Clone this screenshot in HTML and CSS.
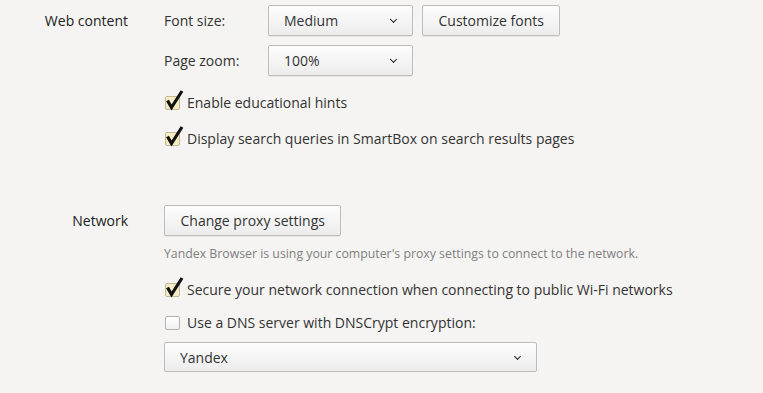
FILE: index.html
```html
<!DOCTYPE html>
<html lang="en">
<head>
  <meta charset="utf-8">
  <title>Settings</title>
  <link rel="stylesheet" href="styles.css">
</head>
<body>
  <div class="settings">
    <!-- Web content -->
    <section class="section">
      <div class="section-label">Web content</div>
      <div class="section-body">
        <div class="row">
          <span class="row-label">Font size:</span>
          <div class="select select-short">Medium<span class="chev"></span></div>
          <button class="btn" type="button">Customize fonts</button>
        </div>
        <div class="row row-gap">
          <span class="row-label">Page zoom:</span>
          <div class="select select-short">100%<span class="chev"></span></div>
        </div>
        <label class="check check-first">
          <span class="box checked"><svg class="tick" width="20" height="22" viewBox="0 0 20 22"><path d="M3.5 11.5 L7.5 18.5 L18 2"/></svg></span>
          Enable educational hints
        </label>
        <label class="check">
          <span class="box checked"><svg class="tick" width="20" height="22" viewBox="0 0 20 22"><path d="M3.5 11.5 L7.5 18.5 L18 2"/></svg></span>
          Display search queries in SmartBox on search results pages
        </label>
      </div>
    </section>

    <!-- Network -->
    <section class="section section-network">
      <div class="section-label">Network</div>
      <div class="section-body">
        <div class="row">
          <button class="btn" type="button">Change proxy settings</button>
        </div>
        <p class="hint">Yandex Browser is using your computer's proxy settings to connect to the network.</p>
        <label class="check check-after-hint">
          <span class="box checked"><svg class="tick" width="20" height="22" viewBox="0 0 20 22"><path d="M3.5 11.5 L7.5 18.5 L18 2"/></svg></span>
          Secure your network connection when connecting to public Wi-Fi networks
        </label>
        <label class="check check-tight"><span class="box"></span>Use a DNS server with DNSCrypt encryption:</label>
        <div class="select select-wide">Yandex<span class="chev"></span></div>
      </div>
    </section>
  </div>
</body>
</html>
```

FILE: styles.css
```css
:root {
  --bg: #f5f4f2;
  --text: #333;
  --border: #bdbdbd;
  --font: 'Open Sans', 'Noto Sans', sans-serif;
}
*, *::before, *::after { box-sizing: border-box; }
body { margin: 0; background: var(--bg); color: var(--text); font-family: var(--font); font-size: 14px; }
.settings { padding-top: 5px; }
.section { display: grid; grid-template-columns: 128px 1fr; column-gap: 36px; }
.section-network { margin-top: 57px; }
.section-label { line-height: 31px; text-align: right; color: #222; }
.section-body { display: flex; flex-direction: column; align-items: flex-start; }
.row { display: flex; align-items: center; height: 31px; }
.row-gap { margin-top: 9px; }
.row-label { width: 104px; }
.select, .btn {
  height: 31px; border: 1px solid var(--border); border-radius: 2px;
  background: linear-gradient(#fdfdfd, #ececec);
  box-shadow: 0 1px 0 rgba(0,0,0,.06);
  font-family: var(--font); font-size: 14px; color: var(--text);
}
.select { display: flex; align-items: center; justify-content: space-between; padding: 0 16px 0 15px; }
.select-short { width: 145px; }
.select-wide { width: 373px; height: 30px; margin-top: 10px; }
.chev { width: 5px; height: 5px; border-right: 1.6px solid #222; border-bottom: 1.6px solid #222; transform: translateY(-1px) rotate(45deg); }
.btn { padding: 0 15.5px; margin-left: 9px; cursor: pointer; }
.row .btn:first-child { margin-left: 0; }
.check { display: flex; align-items: center; height: 20px; margin-top: 16px; }
.check-first { margin-top: 16px; }
.check-after-hint { margin-top: 17px; }
.check-tight { margin-top: 13px; }
.box { position: relative; flex: none; width: 15px; height: 14px; margin: 2px 7px 0 1px; border: 1px solid #b4b4b4; border-radius: 2px; background: linear-gradient(#fff, #f0f0f0); }
.box.checked { background: #f7edc4; border-color: #c2b995; }
.tick { position: absolute; left: -2px; top: -8px; overflow: visible; }
.tick path { fill: none; stroke: #111; stroke-width: 3.2; stroke-linejoin: miter; }
.hint { margin: 10px 0 0; font-size: 12.3px; line-height: 16px; color: #808080; }
```
